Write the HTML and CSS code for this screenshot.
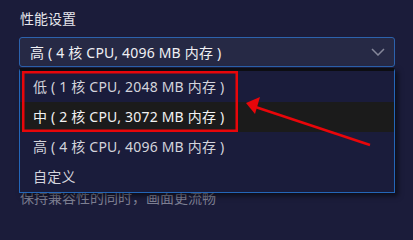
FILE: index.html
```html
<!DOCTYPE html>
<html lang="zh-CN">
<head>
<meta charset="utf-8">
<title>性能设置</title>
<link rel="stylesheet" href="styles.css">
</head>
<body>
<div class="panel">
  <div class="label">性能设置</div>
  <div class="select-wrap">
    <div class="select">
      <span class="select-text">高 ( 4 核 CPU, 4096 MB 内存 )</span>
      <svg class="chevron" width="14" height="8" viewBox="0 0 14 8"><polyline points="1,1 7,7 13,1" fill="none" stroke="#85879a" stroke-width="1.5"/></svg>
    </div>
    <div class="dropdown">
      <div class="option">低 ( 1 核 CPU, 2048 MB 内存 )</div>
      <div class="option active">中 ( 2 核 CPU, 3072 MB 内存 )</div>
      <div class="option">高 ( 4 核 CPU, 4096 MB 内存 )</div>
      <div class="option">自定义</div>
    </div>
  </div>
  <div class="hint">保持兼容性的同时，画面更流畅</div>
</div>
<svg class="annot" width="413" height="205" viewBox="0 0 413 205">
  <rect x="23.25" y="72.25" width="213.5" height="58.5" fill="none" stroke="#e8060a" stroke-width="2.5"/>
  <line x1="370" y1="145" x2="254" y2="106.5" stroke="#e8060a" stroke-width="2.5"/>
  <polygon points="246,103 260,97 255,114" fill="#e8060a"/>
</svg>
</body>
</html>
```
FILE: styles.css
```css
html, body {
  margin: 0;
  padding: 0;
  background: #1b1c3a;
  width: 413px;
  height: 205px;
  overflow: hidden;
  font-family: "Noto Sans", "Noto Sans CJK SC", sans-serif;
}
.panel {
  padding: 9px 18px 0 19px;
}
.label {
  font-size: 14px;
  line-height: 20px;
  color: #e6e6ec;
  padding-left: 1px;
}
.select-wrap {
  position: relative;
  margin-top: 8px;
}
.select {
  box-sizing: border-box;
  height: 30px;
  border: 1px solid #2c62ad;
  border-radius: 3px;
  background: #262945;
  display: flex;
  align-items: center;
  justify-content: space-between;
  padding: 0 9px 0 10px;
  color: #f0f0f4;
  font-size: 14px;
  letter-spacing: 0.2px;
}
.chevron {
  display: block;
}
.dropdown {
  position: absolute;
  left: 0;
  right: 0;
  top: 31px;
  background: #1a1c3b;
  border-top: 3px solid #0c0d12;
  border-left: 1px solid #2466b8;
  border-right: 1px solid #2466b8;
  border-bottom: 1px solid #2466b8;
  box-shadow: 3px 3px 5px rgba(0, 0, 0, 0.55);
  padding-top: 1px;
  z-index: 2;
}
.option {
  height: 30px;
  line-height: 30px;
  padding-left: 13px;
  font-size: 14px;
  letter-spacing: 0.2px;
  color: #d4d4dc;
}
.option.active {
  background: #1b1b1b;
  color: #f2f2f2;
}
.hint {
  margin-top: 121px;
  font-size: 14px;
  line-height: 20px;
  color: #7d7f92;
  padding-left: 1px;
}
.annot {
  position: absolute;
  left: 0;
  top: 0;
  z-index: 5;
  pointer-events: none;
}
```
